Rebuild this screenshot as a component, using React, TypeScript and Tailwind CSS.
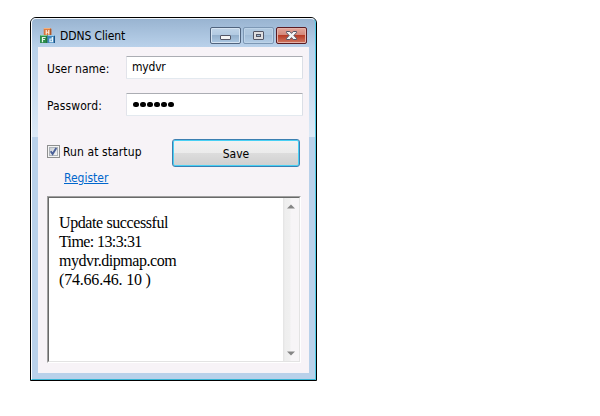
import React from "react";

const ui = "font-['DejaVu_Sans_Condensed','DejaVu_Sans',sans-serif] [font-stretch:condensed]";

function AppIcon() {
  return (
    <svg className="mt-px" width="15" height="15" viewBox="0 0 16 16">
      <rect x="4" y="0" width="8" height="8" rx="1" fill="#d9763c" />
      <rect x="4" y="0" width="7" height="1.2" fill="#f3b07c" />
      <rect x="11" y="1" width="1" height="7" fill="#9c4a20" />
      <path d="M6 2h1.3v2h1.4V2H10v5H8.7V5H7.3v2H6z" fill="#fbe9dc" />
      <rect x="0" y="7.5" width="8" height="8.5" rx="0.6" fill="#2c8c4c" />
      <rect x="0.5" y="7.5" width="7" height="1" fill="#86cf9a" />
      <rect x="7" y="8.5" width="1" height="7.5" fill="#155c2c" />
      <path d="M2 9.5h4v1.2H3.3v1h2v1.1h-2v2.4H2z" fill="#e4f6e8" />
      <rect x="8" y="7.5" width="8" height="8.5" rx="0.6" fill="#3f86bd" />
      <rect x="8.5" y="7.5" width="7" height="1" fill="#a5d0ec" />
      <rect x="15" y="8.5" width="1" height="7.5" fill="#1d4f80" />
      <path d="M12.5 9.5H14v5.7h-4v-4h2.5zM11.3 12.3v1.8h1.2v-1.8z" fill="#e6f3fb" />
    </svg>
  );
}

function CaptionButton({ kind }: { kind: "min" | "max" | "close" }) {
  const skin = {
    min: "border-[#50647e] bg-[linear-gradient(#c0d4e8_0,#b1c9e1_50%,#94b0cc_50%,#acc8e2_100%)] shadow-[inset_0_0_0_1px_#d6e4f2]",
    max: "border-[#7d98b5] bg-[linear-gradient(#b0c8df_0,#adc6df_50%,#a2bdd8_50%,#b3cde6_100%)] shadow-[inset_0_0_0_1px_#bdd3e8]",
    close: "border-[#5a1c24] bg-[linear-gradient(#e2a79c_0,#d28577_50%,#b83c26_50%,#d07862_100%)] shadow-[inset_0_0_0_1px_#e6b3a9]",
  }[kind];
  return (
    <div className={`h-[17px] w-[31px] rounded-[2px] border ${skin}`}>
      <svg className="block" width="29" height="15" viewBox="0 0 29 15">
        {kind === "min" && <rect x="9.5" y="7.5" width="10" height="4" rx="0.5" fill="#f4f4f4" stroke="#535666" />}
        {kind === "max" && (
          <g stroke="#535666">
            <rect x="9.5" y="3.5" width="10" height="8" rx="0.5" fill="#dedee0" />
            <rect x="12.5" y="6.5" width="4" height="2" fill="#9fb9d4" />
          </g>
        )}
        {kind === "close" && (
          <path d="M9.5 3.5h3.3l1.7 1.9 1.7-1.9h3.3v1.2l-2.6 2.8 2.6 2.8v1.2h-3.3l-1.7-1.9-1.7 1.9H9.5v-1.2l2.6-2.8-2.6-2.8z" fill="#f4f4f4" stroke="#535666" />
        )}
      </svg>
    </div>
  );
}

export default function App() {
  return (
    <div className="h-[416px] w-[600px] overflow-hidden bg-white pl-[30px] pt-[17px]">
      <div className={`h-[364px] w-[287px] rounded-t-[6px] border border-black bg-[#b9d1ea] text-[12px] leading-[16px] text-black ${ui}`}>
        <div className="h-full rounded-t-[5px] border border-b-[#36b4d4] border-l-white border-r-[#4fcbe6] border-t-[#f2f7fc] bg-[linear-gradient(#99b4d1_0,#b9d1ea_28px,#bdd3eb_40px,#dce9f6_118px,#b9d1ea_118px)] px-[6px] pb-[6px]">
          <div className="flex h-[28px] items-start pl-[2px] pr-[2px] pt-[8px]">
            <AppIcon />
            <span className="ml-[5px] mt-[1px] grow whitespace-nowrap tracking-[-0.1px]">DDNS Client</span>
            <div className="flex gap-[2px]">
              <CaptionButton kind="min" />
              <CaptionButton kind="max" />
              <CaptionButton kind="close" />
            </div>
          </div>

          <div className="h-[326px] w-[271px] bg-[#f7f3f7] pl-[9px] pt-[9px]">
            <div className="flex">
              <label className="w-[79px] whitespace-nowrap pt-[5px]">User name:</label>
              <div className="h-[23px] w-[177px] rounded-[1px] border border-b-[#e3e9ef] border-l-[#e2e3ea] border-r-[#dbdfe6] border-t-[#abadb3] bg-white pl-[5px] pt-[2px] tracking-[-0.2px]">mydvr</div>
            </div>
            <div className="mt-[14px] flex">
              <label className="w-[79px] whitespace-nowrap pt-[5px] tracking-[0.1px]">Password:</label>
              <div className="flex h-[23px] w-[177px] items-center gap-[1.5px] rounded-[1px] border border-b-[#e3e9ef] border-l-[#e2e3ea] border-r-[#dbdfe6] border-t-[#abadb3] bg-white pl-[6px]">
                {[0, 1, 2, 3, 4, 5].map((i) => (
                  <i key={i} className="h-[5.5px] w-[5.5px] rounded-full bg-black" />
                ))}
              </div>
            </div>

            <div className="mt-[23px] flex">
              <div className="w-[125px]">
                <div className="flex items-start pt-[5px]">
                  <div className="mt-px h-[13px] w-[13px] border border-[#8e8f8f] bg-[#f4f4f4] p-px">
                    <div className="h-[9px] w-[9px] border border-[#aeb3b9] bg-[linear-gradient(135deg,#cbcfd5,#f6f6f6)]">
                      <svg className="block overflow-visible" width="7" height="7" viewBox="0 0 7 7">
                        <path d="M0.7 3.3 2.6 6 6.3 0" fill="none" stroke="#4a5f97" strokeWidth="1.9" />
                      </svg>
                    </div>
                  </div>
                  <span className="ml-[3px] whitespace-nowrap tracking-[0.1px]">Run at startup</span>
                </div>
                <a className="ml-[17px] mt-[10px] block w-fit text-[#0066cc] underline">Register</a>
              </div>
              <div className="flex h-[28px] w-[128px] items-center justify-center rounded-[3px] border border-[#3c7fb1] bg-[linear-gradient(#f2f2f2_0,#ebebeb_50%,#dddddd_50%,#cfcfcf_100%)] pt-px shadow-[inset_0_0_0_1px_#48d0f4]">Save</div>
            </div>

            <div className="mt-[10px] h-[167px] w-[254px] border border-b-white border-l-[#a0a0a0] border-r-white border-t-[#a0a0a0]">
              <div className="flex h-full border border-b-[#e3e3e3] border-l-[#696969] border-r-[#e3e3e3] border-t-[#696969] bg-white">
                <div className="grow whitespace-nowrap pl-[10px] pt-[15px] font-['Liberation_Serif',serif] text-[16px] leading-[19px]">
                  <p className="tracking-[-0.4px]">Update successful</p>
                  <p className="tracking-[-0.6px]">Time: 13:3:31</p>
                  <p className="tracking-[-0.45px]">mydvr.dipmap.com</p>
                  <p className="tracking-[-0.2px]">(74.66.46. 10 )</p>
                </div>
                <div className="flex w-[16px] flex-col items-center justify-between bg-[linear-gradient(90deg,#e3e3e3_0,#eeeeee_2px,#f0f0f0_7px,#f7f5f7_8px)] pb-[5px] pt-[6px]">
                  <svg width="8" height="5" viewBox="0 0 8 5"><path d="M0 4.5 4 .5l4 4z" fill="#858585" /></svg>
                  <svg width="8" height="5" viewBox="0 0 8 5"><path d="M0 .5h8l-4 4z" fill="#858585" /></svg>
                </div>
              </div>
            </div>
          </div>
        </div>
      </div>
    </div>
  );
}
